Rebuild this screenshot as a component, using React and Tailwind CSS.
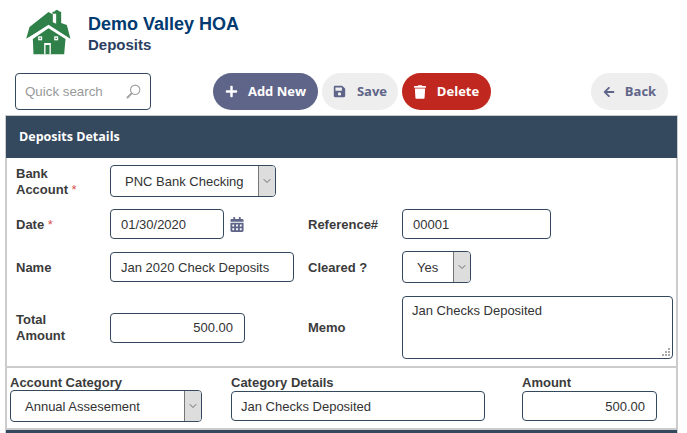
import React from 'react';
import { FaSave, FaTrash, FaArrowLeft, FaPlus, FaCalendarAlt } from 'react-icons/fa';
import { ChevronDown } from 'lucide-react';

const HouseLogo = () => (
  <svg viewBox="60 20 170 150" className="w-[57px] h-[50px] shrink-0">
    <path d="M78 115 L88 80 L145 35 L157 42 L157 34 L183 34 L183 68 L200 74 L211 116 L145 76 Z" fill="#2f8049" />
    <path d="M163 32 L171 28 L181 36 L181 68 L165 60 Z" fill="#2f8049" />
    <path d="M158 40 L158 66 L168 70 L168 40 Z" fill="#fff" />
    <path d="M98 116 L145 84 L196 116 L192 162 L100 162 Z" fill="#2f8049" />
    <path d="M80 118 L145 76 L210 118" fill="none" stroke="#fff" strokeWidth="4" />
    <rect x="114" y="108" width="12" height="12" fill="#fff" />
    <rect x="162" y="108" width="12" height="12" fill="#fff" />
    <rect x="118" y="112" width="4" height="4" fill="#2f8049" />
    <rect x="166" y="112" width="4" height="4" fill="#2f8049" />
    <path d="M132 162 L132 128 L152 128 L152 162 L148 162 L148 134 L136 134 L136 162 Z" fill="#fff" />
  </svg>
);

const SearchIcon = () => (
  <svg viewBox="0 0 16 16" className="w-[15px] h-[15px]" fill="none" stroke="#a3a3a3">
    <circle cx="9.8" cy="6.2" r="5" strokeWidth="1.2" />
    <path d="M6 10 L1.6 14.4" strokeWidth="2.2" strokeLinecap="round" />
  </svg>
);

const PillButton = ({ icon, label, className }) => (
  <button className={`h-[37px] rounded-full flex items-center justify-center font-['Open_Sans',sans-serif] font-bold text-[13px] ${className}`}>
    {icon}
    {label}
  </button>
);

const TextField = ({ value, className = '', right }) => (
  <input
    readOnly
    value={value}
    className={`h-[30px] border border-[#34495e] rounded-[4px] bg-white text-[13px] text-[#333] outline-none ${right ? 'text-right pr-[11px] pl-2' : 'px-[10px]'} ${className}`}
  />
);

const SelectField = ({ value, className = '' }) => (
  <div className={`h-[32px] flex border border-[#34495e] rounded-[4px] overflow-hidden bg-white text-[13px] text-[#333] ${className}`}>
    <div className="flex-1 flex items-center whitespace-nowrap pl-[14px] pt-px">{value}</div>
    <div className="w-[17px] flex items-center justify-center bg-[#dddddd] border-l border-[#767676]">
      <ChevronDown className="w-[12px] h-[12px] text-[#444]" strokeWidth={1.5} />
    </div>
  </div>
);

const FieldLabel = ({ children, required, className = '' }) => (
  <div className={`font-bold text-[13px] leading-[16px] text-[#3b3b3b] ${className}`}>
    {children}
    {required && <span className="text-[#d9534f] font-normal"> *</span>}
  </div>
);

export default function App() {
  return (
    <div className="w-[687px] h-[433px] overflow-hidden bg-white font-['Liberation_Sans',Arial,sans-serif]">
      {/* page title */}
      <div className="h-[73px] flex items-start pl-[20px] pt-[7px]">
        <HouseLogo />
        <div className="ml-[11px] pt-[7px]">
          <div className="text-[18px] leading-[21px] font-bold text-[#003a70]">Demo Valley HOA</div>
          <div className="text-[15px] leading-[18px] mt-[1px] font-bold text-[#2c3e5f]">Deposits</div>
        </div>
      </div>

      {/* toolbar */}
      <div className="h-[42px] flex items-start pl-[15px] pr-[19px]">
        <div className="w-[136px] h-[37px] flex items-center justify-between border border-[#34495e] rounded-[4px] pl-[9px] pr-[9px]">
          <span className="text-[13.33px] text-[#999]">Quick search</span>
          <SearchIcon />
        </div>
        <div className="flex gap-1 ml-[62px]">
          <PillButton
            className="w-[105px] bg-[#5f6589] text-white"
            icon={<FaPlus className="w-[13px] h-[13px] mr-[10px]" />}
            label="Add New"
          />
          <PillButton
            className="w-[76px] bg-[#eeeeee] text-[#5f6589]"
            icon={<FaSave className="w-[13px] h-[13px] mr-[11px]" />}
            label="Save"
          />
          <PillButton
            className="w-[89px] bg-[#c0281f] text-white"
            icon={<FaTrash className="w-[12px] h-[14px] mr-[11px]" />}
            label="Delete"
          />
        </div>
        <PillButton
          className="w-[77px] ml-auto bg-[#eeeeee] text-[#5f6589]"
          icon={<FaArrowLeft className="w-[12px] h-[12px] mr-[10px]" />}
          label="Back"
        />
      </div>

      {/* details panel */}
      <div className="ml-[5px] w-[673px] h-[318px] border-x-2 border-[#cccccc]">
        <div className="h-[43px] -mx-px flex items-center pl-[13px] pt-px bg-[#34495e] border-t border-[#cccccc] text-white font-['Open_Sans',sans-serif] font-bold text-[12.5px]">
          Deposits Details
        </div>

        <div className="h-[210px] pl-[9px] pr-[3px] pt-[7px] border-b-2 border-[#cccccc]">
          <div className="h-[32px] flex items-center">
            <FieldLabel required className="w-[94px] pt-[1px]">Bank<br />Account</FieldLabel>
            <SelectField value="PNC Bank Checking" className="w-[166px]" />
          </div>

          <div className="h-[30px] mt-[12px] flex items-center">
            <FieldLabel required className="w-[94px] pt-px">Date</FieldLabel>
            <TextField value="01/30/2020" className="w-[114px]" />
            <FaCalendarAlt className="w-[14px] h-[15px] ml-[6px] text-[#5f6589]" />
            <FieldLabel className="w-[94px] ml-[64px] pt-px">Reference#</FieldLabel>
            <TextField value="00001" className="w-[149px]" />
          </div>

          <div className="h-[32px] mt-[12px] flex items-center">
            <FieldLabel className="w-[94px] pt-px">Name</FieldLabel>
            <TextField value="Jan 2020 Check Deposits" className="w-[184px]" />
            <FieldLabel className="w-[94px] ml-[14px] pt-px">Cleared ?</FieldLabel>
            <SelectField value="Yes" className="w-[69px]" />
          </div>

          <div className="h-[63px] mt-[13px] flex items-center">
            <FieldLabel className="w-[94px]">Total<br />Amount</FieldLabel>
            <TextField value="500.00" right className="w-[135px]" />
            <FieldLabel className="w-[94px] ml-[63px]">Memo</FieldLabel>
            <div className="relative w-[271px] h-[63px]">
              <textarea
                readOnly
                defaultValue="Jan Checks Deposited"
                className="block w-full h-full resize-none px-[9px] py-[6px] border border-[#34495e] rounded-[4px] text-[13px] leading-[16px] text-[#333] outline-none"
              />
              {/* resize grip */}
              <svg viewBox="0 0 8 8" className="absolute right-[3px] bottom-[3px] w-[8px] h-[8px]" fill="#aaaaaa">
                <rect x="6" y="0" width="2" height="2" />
                <rect x="3" y="3" width="2" height="2" />
                <rect x="6" y="3" width="2" height="2" />
                <rect x="0" y="6" width="2" height="2" />
                <rect x="3" y="6" width="2" height="2" />
                <rect x="6" y="6" width="2" height="2" />
              </svg>
            </div>
          </div>
        </div>

        <div className="h-[62px] pl-[3px] pt-[7px] border-b-2 border-[#cccccc] flex items-start">
          <div className="w-[192px]">
            <FieldLabel>Account Category</FieldLabel>
            <SelectField value="Annual Assesement" className="w-[192px] -mt-px" />
          </div>
          <div className="w-[254px] ml-[29px]">
            <FieldLabel>Category Details</FieldLabel>
            <TextField value="Jan Checks Deposited" className="w-[254px] !pl-[9px]" />
          </div>
          <div className="w-[135px] ml-[37px]">
            <FieldLabel>Amount</FieldLabel>
            <TextField value="500.00" right className="w-[135px]" />
          </div>
        </div>

        <div className="h-[3px] -mx-px bg-[#34495e]" />
      </div>
    </div>
  );
}
